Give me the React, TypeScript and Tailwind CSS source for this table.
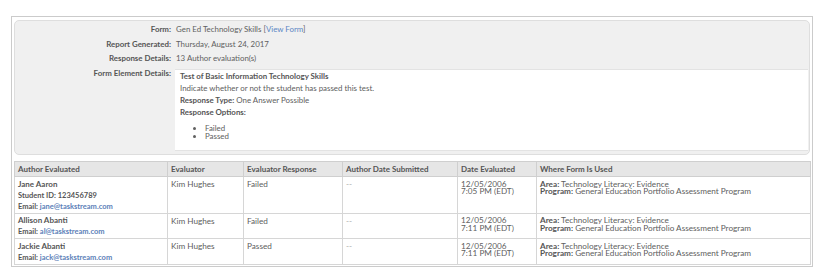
import React from "react";

const rows = [
  {
    name: "Jane Aaron",
    sid: "Student ID: 123456789",
    email: "jane@taskstream.com",
    response: "Failed",
    time: "7:05 PM (EDT)",
  },
  {
    name: "Allison Abanti",
    email: "al@taskstream.com",
    response: "Failed",
    time: "7:11 PM (EDT)",
  },
  {
    name: "Jackie Abanti",
    email: "jack@taskstream.com",
    response: "Passed",
    time: "7:11 PM (EDT)",
  },
];

export default function App() {
  return (
    <div
      className="w-[823px] h-[278px] bg-white pt-[16px] pl-[11px] text-[7.9px] text-[#606060]"
      style={{ fontFamily: "Lato, 'Open Sans', sans-serif" }}
    >
      <div className="w-[802px] border border-[#cbcbcb] pt-[3px] px-[2px] pb-[1px]">
        {/* Summary panel */}
        <div className="rounded-[5px] border border-[#dedede] bg-[#f0f0f0] pt-[1px]">
          <div className="flex leading-[14.6px]">
            <div className="w-[160px] shrink-0 text-right pr-[4px] font-bold text-[#555]">Form:</div>
            <div className="pl-[1px]">
              Gen Ed Technology Skills [<span className="text-[#5b87c5]">View Form</span>]
            </div>
          </div>
          <div className="flex leading-[14.6px]">
            <div className="w-[160px] shrink-0 text-right pr-[4px] font-bold text-[#555]">Report Generated:</div>
            <div className="pl-[1px]">Thursday, August 24, 2017</div>
          </div>
          <div className="flex leading-[14.6px]">
            <div className="w-[160px] shrink-0 text-right pr-[4px] font-bold text-[#555]">Response Details:</div>
            <div className="pl-[1px]">13 Author evaluation(s)</div>
          </div>
          <div className="flex">
            <div className="w-[160px] shrink-0 text-right pr-[4px] font-bold text-[#555] leading-[14.6px]">
              Form Element Details:
            </div>
            <div className="flex-1 mt-[3px] mb-[3px] mr-[1px] bg-white border-y border-[#e3e3e3] px-[5px] leading-[12px]">
              <div className="font-bold text-[#555]">Test of Basic Information Technology Skills</div>
              <div>Indicate whether or not the student has passed this test.</div>
              <div>
                <span className="font-bold text-[#555]">Response Type:</span> One Answer Possible
              </div>
              <div className="font-bold text-[#555]">Response Options:</div>
              <ul className="mt-[6px] mb-[10px] pl-[25px] list-disc leading-[8.3px]">
                <li>Failed</li>
                <li>Passed</li>
              </ul>
            </div>
          </div>
        </div>

        {/* Results table */}
        <table className="mt-[6px] w-[796px] table-fixed border-collapse border border-[#cfcfcf]">
          <colgroup>
            <col className="w-[153px]" />
            <col className="w-[76px]" />
            <col className="w-[99px]" />
            <col className="w-[115px]" />
            <col className="w-[79px]" />
            <col className="w-[274px]" />
          </colgroup>
          <thead>
            <tr className="bg-[#e6e6e6] text-[#555] font-bold text-left text-[8px]">
              <th className="border border-[#cfcfcf] px-[3px] py-0 h-[15px] leading-[14px] font-bold">Author Evaluated</th>
              <th className="border border-[#cfcfcf] px-[3px] py-0 leading-[14px] font-bold">Evaluator</th>
              <th className="border border-[#cfcfcf] px-[3px] py-0 leading-[14px] font-bold">Evaluator Response</th>
              <th className="border border-[#cfcfcf] px-[3px] py-0 leading-[14px] font-bold">Author Date Submitted</th>
              <th className="border border-[#cfcfcf] px-[3px] py-0 leading-[14px] font-bold">Date Evaluated</th>
              <th className="border border-[#cfcfcf] px-[3px] py-0 leading-[14px] font-bold">Where Form Is Used</th>
            </tr>
          </thead>
          <tbody className="text-[8.2px]">
            {rows.map((r) => (
              <tr key={r.name} className="align-top">
                <td className="border border-[#d6d6d6] px-[3px] pt-[1.5px] pb-[1px] leading-[11px] font-bold text-[#555] text-[8px]">
                  <div>{r.name}</div>
                  {r.sid && <div className="text-[7.5px]">{r.sid}</div>}
                  <div className="text-[7.5px]">
                    Email: <span className="text-[#5b80b8]">{r.email}</span>
                  </div>
                </td>
                <td className="border border-[#d6d6d6] px-[3px] pt-[2px] leading-[10.5px]">Kim Hughes</td>
                <td className="border border-[#d6d6d6] px-[3px] pt-[2px] leading-[10.5px]">{r.response}</td>
                <td className="border border-[#d6d6d6] px-[3px] pt-[2px] leading-[10.5px] text-[#aaa]">--</td>
                <td className="border border-[#d6d6d6] px-[3px] pt-[3.3px] leading-[7.6px]">
                  <div>12/05/2006</div>
                  <div>{r.time}</div>
                </td>
                <td className="border border-[#d6d6d6] px-[3px] pt-[3.3px] leading-[7.6px]">
                  <div>
                    <span className="font-bold text-[#555]">Area:</span> Technology Literacy: Evidence
                  </div>
                  <div>
                    <span className="font-bold text-[#555]">Program:</span> General Education Portfolio Assessment Program
                  </div>
                </td>
              </tr>
            ))}
          </tbody>
        </table>
      </div>
    </div>
  );
}
